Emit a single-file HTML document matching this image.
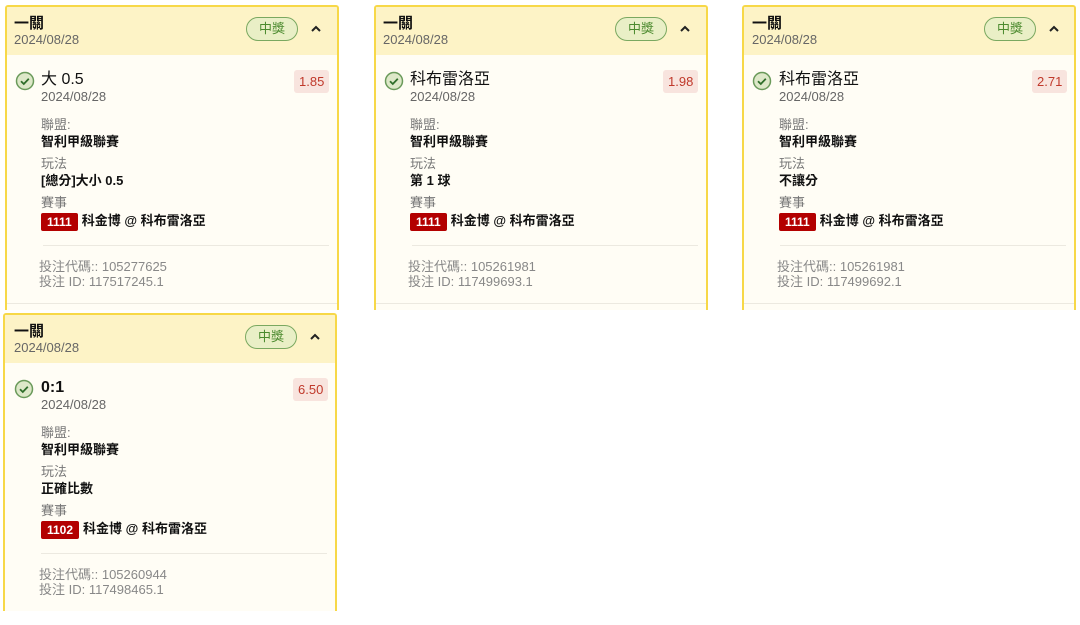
<!DOCTYPE html>
<html><head><meta charset="utf-8"><style>
body{margin:0;width:1080px;height:625px;background:#fff;overflow:hidden;position:relative;font-family:"Liberation Sans","Noto Sans CJK TC",sans-serif}
.card{position:absolute;width:330px;border:2px solid #f7d848;border-bottom:none;border-radius:3px 3px 0 0;background:#fffdf5;overflow:hidden}
.hd{position:absolute;left:0;top:0;right:0;height:48px;background:#fdf3c6}
.a{position:absolute;white-space:nowrap}
.t{font-size:15px;font-weight:bold;color:#111;line-height:17px}
.d{font-size:13px;color:#666;line-height:15px}
.n{font-size:16px;color:#111;line-height:18px}
.badge{width:50px;height:22px;border:1.5px solid #7aa860;border-radius:12px;background:#e9efc6;color:#4b8a2e;font-size:13px;text-align:center;line-height:22px}
.odds{background:#f8e4de;color:#c0392b;font-size:13px;padding:0 5px;height:23px;line-height:23px;border-radius:3px}
.lb{font-size:13px;color:#777;line-height:16px}
.v{font-size:13px;font-weight:bold;color:#111;line-height:18px}
.tag{display:inline-block;background:#b30000;color:#fff;font-size:12px;font-weight:bold;padding:0 6px;height:18px;line-height:18px;border-radius:2px;margin-right:4px;vertical-align:middle}
.hr{position:absolute;left:36px;width:286px;height:1px;background:#ece9e0}
.f{font-size:13px;color:#888;line-height:15px}
</style></head><body>

<div class="card" style="left:5px;top:5px;height:303px">
<div class="hd"></div>
<div class="a t" style="left:7px;top:8px">一關</div>
<div class="a d" style="left:7px;top:25px">2024/08/28</div>
<div class="a badge" style="left:239px;top:10px">中獎</div>
<svg class="a" style="left:303px;top:17px" width="12" height="10"><path d="M2 7l4-4 4 4" fill="none" stroke="#222" stroke-width="2"/></svg>
<svg class="a" style="left:8px;top:64px" width="20" height="20"><circle cx="10" cy="10" r="8.5" fill="#dde8c8" stroke="#6a9a5a" stroke-width="1.5"/><path d="M6 10.2l2.8 2.8 5-5.2" fill="none" stroke="#2f6e2a" stroke-width="1.8"/></svg>
<div class="a n" style="left:34px;top:64px">大 0.5</div>
<div class="a d" style="left:34px;top:82px">2024/08/28</div>
<div class="a odds" style="left:287px;top:63px">1.85</div>
<div class="a lb" style="left:34px;top:110px">聯盟:</div>
<div class="a v" style="left:34px;top:126px">智利甲級聯賽</div>
<div class="a lb" style="left:34px;top:149px">玩法</div>
<div class="a v" style="left:34px;top:165px">[總分]大小 0.5</div>
<div class="a lb" style="left:34px;top:188px">賽事</div>
<div class="a v" style="left:34px;top:205px"><span class="tag">1111</span>科金博 @ 科布雷洛亞</div>
<div class="hr" style="top:238px"></div>
<div class="a f" style="left:32px;top:252px">投注代碼:: 105277625<br>投注 ID: 117517245.1</div>
<div class="hr" style="top:296px;left:0;width:330px"></div>
</div>

<div class="card" style="left:374px;top:5px;height:303px">
<div class="hd"></div>
<div class="a t" style="left:7px;top:8px">一關</div>
<div class="a d" style="left:7px;top:25px">2024/08/28</div>
<div class="a badge" style="left:239px;top:10px">中獎</div>
<svg class="a" style="left:303px;top:17px" width="12" height="10"><path d="M2 7l4-4 4 4" fill="none" stroke="#222" stroke-width="2"/></svg>
<svg class="a" style="left:8px;top:64px" width="20" height="20"><circle cx="10" cy="10" r="8.5" fill="#dde8c8" stroke="#6a9a5a" stroke-width="1.5"/><path d="M6 10.2l2.8 2.8 5-5.2" fill="none" stroke="#2f6e2a" stroke-width="1.8"/></svg>
<div class="a n" style="left:34px;top:64px">科布雷洛亞</div>
<div class="a d" style="left:34px;top:82px">2024/08/28</div>
<div class="a odds" style="left:287px;top:63px">1.98</div>
<div class="a lb" style="left:34px;top:110px">聯盟:</div>
<div class="a v" style="left:34px;top:126px">智利甲級聯賽</div>
<div class="a lb" style="left:34px;top:149px">玩法</div>
<div class="a v" style="left:34px;top:165px">第 1 球</div>
<div class="a lb" style="left:34px;top:188px">賽事</div>
<div class="a v" style="left:34px;top:205px"><span class="tag">1111</span>科金博 @ 科布雷洛亞</div>
<div class="hr" style="top:238px"></div>
<div class="a f" style="left:32px;top:252px">投注代碼:: 105261981<br>投注 ID: 117499693.1</div>
<div class="hr" style="top:296px;left:0;width:330px"></div>
</div>

<div class="card" style="left:742px;top:5px;height:303px">
<div class="hd"></div>
<div class="a t" style="left:8px;top:8px">一關</div>
<div class="a d" style="left:8px;top:25px">2024/08/28</div>
<div class="a badge" style="left:240px;top:10px">中獎</div>
<svg class="a" style="left:304px;top:17px" width="12" height="10"><path d="M2 7l4-4 4 4" fill="none" stroke="#222" stroke-width="2"/></svg>
<svg class="a" style="left:8px;top:64px" width="20" height="20"><circle cx="10" cy="10" r="8.5" fill="#dde8c8" stroke="#6a9a5a" stroke-width="1.5"/><path d="M6 10.2l2.8 2.8 5-5.2" fill="none" stroke="#2f6e2a" stroke-width="1.8"/></svg>
<div class="a n" style="left:35px;top:64px">科布雷洛亞</div>
<div class="a d" style="left:35px;top:82px">2024/08/28</div>
<div class="a odds" style="left:288px;top:63px">2.71</div>
<div class="a lb" style="left:35px;top:110px">聯盟:</div>
<div class="a v" style="left:35px;top:126px">智利甲級聯賽</div>
<div class="a lb" style="left:35px;top:149px">玩法</div>
<div class="a v" style="left:35px;top:165px">不讓分</div>
<div class="a lb" style="left:35px;top:188px">賽事</div>
<div class="a v" style="left:35px;top:205px"><span class="tag">1111</span>科金博 @ 科布雷洛亞</div>
<div class="hr" style="top:238px"></div>
<div class="a f" style="left:33px;top:252px">投注代碼:: 105261981<br>投注 ID: 117499692.1</div>
<div class="hr" style="top:296px;left:0;width:330px"></div>
</div>

<div class="card" style="left:3px;top:313px;height:296px">
<div class="hd"></div>
<div class="a t" style="left:9px;top:8px">一關</div>
<div class="a d" style="left:9px;top:25px">2024/08/28</div>
<div class="a badge" style="left:240px;top:10px">中獎</div>
<svg class="a" style="left:304px;top:17px" width="12" height="10"><path d="M2 7l4-4 4 4" fill="none" stroke="#222" stroke-width="2"/></svg>
<svg class="a" style="left:9px;top:64px" width="20" height="20"><circle cx="10" cy="10" r="8.5" fill="#dde8c8" stroke="#6a9a5a" stroke-width="1.5"/><path d="M6 10.2l2.8 2.8 5-5.2" fill="none" stroke="#2f6e2a" stroke-width="1.8"/></svg>
<div class="a n" style="left:36px;top:64px;font-weight:bold">0:1</div>
<div class="a d" style="left:36px;top:82px">2024/08/28</div>
<div class="a odds" style="left:288px;top:63px">6.50</div>
<div class="a lb" style="left:36px;top:110px">聯盟:</div>
<div class="a v" style="left:36px;top:126px">智利甲級聯賽</div>
<div class="a lb" style="left:36px;top:149px">玩法</div>
<div class="a v" style="left:36px;top:165px">正確比數</div>
<div class="a lb" style="left:36px;top:188px">賽事</div>
<div class="a v" style="left:36px;top:205px"><span class="tag">1102</span>科金博 @ 科布雷洛亞</div>
<div class="hr" style="top:238px"></div>
<div class="a f" style="left:34px;top:252px">投注代碼:: 105260944<br>投注 ID: 117498465.1</div>
</div>

</body></html>
